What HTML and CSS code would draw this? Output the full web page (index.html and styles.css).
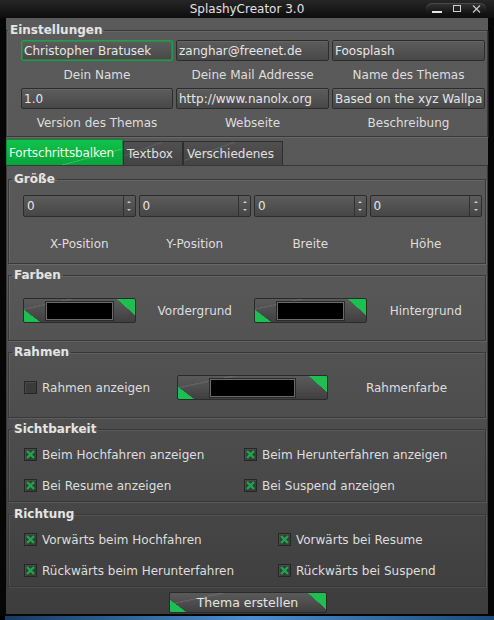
FILE: index.html
```html
<!DOCTYPE html>
<html lang="de">
<head>
    <meta charset="UTF-8">
    <meta name="viewport" content="width=device-width, initial-scale=1.0">
    <title>SplashyCreator 3.0</title>
    <link rel="stylesheet" href="styles.css">
</head>
<body>
    <div class="window">
        <!-- Title bar -->
        <div class="titlebar">
            <span></span>
            <span class="title">SplashyCreator 3.0</span>
            <span class="win-buttons">
                <svg width="60" height="12" viewBox="0 0 60 12">
                    <rect x="6" y="8" width="10" height="2" fill="#e6e6e6"/>
                    <rect x="27.5" y="2.5" width="7" height="6" fill="none" stroke="#d0d0d0"/>
                    <path d="M47 2.5l7 7M54 2.5l-7 7" stroke="#c8c8c8" stroke-width="1.2"/>
                </svg>
            </span>
        </div>

        <div class="frame">
            <div class="client">
                <!-- Einstellungen -->
                <fieldset class="group top">
                    <legend>Einstellungen</legend>
                    <div class="settings-grid">
                        <input class="field focus" type="text" value="Christopher Bratusek">
                        <input class="field" type="text" value="zanghar@freenet.de">
                        <input class="field" type="text" value="Foosplash">
                        <span class="cap">Dein Name</span>
                        <span class="cap">Deine Mail Addresse</span>
                        <span class="cap">Name des Themas</span>
                        <input class="field" type="text" value="1.0">
                        <input class="field" type="text" value="http://www.nanolx.org">
                        <input class="field" type="text" value="Based on the xyz Wallpaper">
                        <span class="cap">Version des Themas</span>
                        <span class="cap">Webseite</span>
                        <span class="cap">Beschreibung</span>
                    </div>
                </fieldset>

                <!-- Tabs -->
                <div class="tabs">
                    <span class="tab active">Fortschrittsbalken</span>
                    <span class="tab t-textbox">Textbox</span>
                    <span class="tab t-misc">Verschiedenes</span>
                </div>

                <div class="pane">
                    <fieldset class="group size">
                        <legend>Größe</legend>
                        <div class="four-grid">
                            <div class="spin"><span class="spin-val">0</span><span class="spin-btn"></span></div>
                            <div class="spin"><span class="spin-val">0</span><span class="spin-btn"></span></div>
                            <div class="spin"><span class="spin-val">0</span><span class="spin-btn"></span></div>
                            <div class="spin"><span class="spin-val">0</span><span class="spin-btn"></span></div>
                            <span class="cap size-cap">X-Position</span>
                            <span class="cap size-cap">Y-Position</span>
                            <span class="cap size-cap">Breite</span>
                            <span class="cap size-cap">Höhe</span>
                        </div>
                    </fieldset>

                    <fieldset class="group colors">
                        <legend>Farben</legend>
                        <div class="four-grid">
                            <span class="swatch-btn"><span class="swatch"></span></span>
                            <span class="cap">Vordergrund</span>
                            <span class="swatch-btn"><span class="swatch"></span></span>
                            <span class="cap">Hintergrund</span>
                        </div>
                    </fieldset>

                    <fieldset class="group colors">
                        <legend>Rahmen</legend>
                        <div class="three-grid">
                            <label class="check-row"><span class="check"></span>Rahmen anzeigen</label>
                            <span class="swatch-btn wide"><span class="swatch"></span></span>
                            <span class="cap">Rahmenfarbe</span>
                        </div>
                    </fieldset>

                    <fieldset class="group options">
                        <legend>Sichtbarkeit</legend>
                        <div class="opt-grid visibility">
                            <label class="check-row"><span class="check on"><svg viewBox="0 0 11 11"><path d="M2 2l7 7M9 2l-7 7"/></svg></span>Beim Hochfahren anzeigen</label>
                            <label class="check-row"><span class="check on"><svg viewBox="0 0 11 11"><path d="M2 2l7 7M9 2l-7 7"/></svg></span>Beim Herunterfahren anzeigen</label>
                            <label class="check-row"><span class="check on"><svg viewBox="0 0 11 11"><path d="M2 2l7 7M9 2l-7 7"/></svg></span>Bei Resume anzeigen</label>
                            <label class="check-row"><span class="check on"><svg viewBox="0 0 11 11"><path d="M2 2l7 7M9 2l-7 7"/></svg></span>Bei Suspend anzeigen</label>
                        </div>
                    </fieldset>

                    <fieldset class="group options direction">
                        <legend>Richtung</legend>
                        <div class="opt-grid">
                            <label class="check-row"><span class="check on"><svg viewBox="0 0 11 11"><path d="M2 2l7 7M9 2l-7 7"/></svg></span>Vorwärts beim Hochfahren</label>
                            <label class="check-row"><span class="check on"><svg viewBox="0 0 11 11"><path d="M2 2l7 7M9 2l-7 7"/></svg></span>Vorwärts bei Resume</label>
                            <label class="check-row"><span class="check on"><svg viewBox="0 0 11 11"><path d="M2 2l7 7M9 2l-7 7"/></svg></span>Rückwärts beim Herunterfahren</label>
                            <label class="check-row"><span class="check on"><svg viewBox="0 0 11 11"><path d="M2 2l7 7M9 2l-7 7"/></svg></span>Rückwärts bei Suspend</label>
                        </div>
                    </fieldset>
                </div>

                <div class="footer">
                    <button class="create-btn">Thema erstellen</button>
                </div>
            </div>
        </div>
    </div>
    <div class="desktop"></div>
</body>
</html>
```

FILE: styles.css
```css
* {
    box-sizing: border-box;
}
html, body {
    margin: 0;
    padding: 0;
}
body {
    background: #000;
    font-family: "DejaVu Sans", "Liberation Sans", sans-serif;
    font-size: 12px;
    color: #dcdcdc;
    width: 494px;
    height: 620px;
    overflow: hidden;
}
.window {
    width: 494px;
    height: 616px;
    background: #060606;
    display: flex;
    flex-direction: column;
}
.desktop {
    height: 4px;
    margin-left: 5px;
    background: linear-gradient(90deg, #163a60, #4b8fd0 50%, #1d4a7a);
}

/* title bar */
.titlebar {
    height: 18px;
    display: grid;
    grid-template-columns: 1fr auto 1fr;
    align-items: center;
    background: linear-gradient(#262626, #0d0d0d);
}
.title {
    color: #e2e2e2;
    line-height: 18px;
}
.win-buttons {
    justify-self: end;
    margin-right: 8px;
    width: 60px;
    height: 12px;
    border-radius: 6px;
    background: linear-gradient(#333, #0e0e0e);
    box-shadow: inset 0 1px 0 #4a4a4a;
}
.win-buttons svg {
    display: block;
}

/* client area */
.frame {
    flex: 1;
    padding: 0 6px 2px 6px;
    display: flex;
}
.client {
    flex: 1;
    display: flex;
    flex-direction: column;
    background: linear-gradient(#5a5a5a 0%, #575757 45%, #4a4a4a 75%, #3d3d3d 100%);
}

/* group boxes */
.group {
    margin: 0;
    padding: 0;
    min-width: 0;
    border: 1px solid #383838;
    box-shadow: inset 1px 1px 0 rgba(255, 255, 255, 0.08), 1px 1px 0 rgba(255, 255, 255, 0.1);
}
.group legend {
    margin-left: 3px;
    padding: 0 2px;
    font-weight: bold;
    line-height: 16px;
    color: #e4e4e4;
}
.group.top {
    margin-top: 4px;
}
.group.top legend {
    margin-left: 1px;
}

.settings-grid {
    display: grid;
    grid-template-columns: 152px 153px 153px;
    grid-template-rows: 21px 27px 21px 27px;
    column-gap: 3px;
    padding: 2px 0 0 14px;
}
.cap {
    text-align: center;
    align-self: center;
    white-space: nowrap;
    color: #dedede;
}
.settings-grid .cap {
    padding-top: 1px;
}

.field {
    height: 21px;
    width: 100%;
    margin: 0;
    padding: 0 2px;
    font: inherit;
    color: #e6e6e6;
    border: 1px solid #2c2c2c;
    border-radius: 2px;
    background: linear-gradient(#5c5c5c, #484848);
    box-shadow: inset 0 1px 0 rgba(255, 255, 255, 0.06);
    outline: none;
}
.field.focus {
    border-color: #1f9f48;
    box-shadow: inset 0 0 0 1px rgba(31, 159, 72, 0.55);
}

/* tabs */
.tabs {
    margin-top: 2px;
    height: 26px;
    display: flex;
    align-items: flex-end;
}
.tab {
    height: 24px;
    line-height: 24px;
    padding: 0 3px;
    white-space: nowrap;
    overflow: hidden;
    border: 1px solid #2e2e2e;
    border-bottom: none;
    background: linear-gradient(160deg, transparent 30%, rgba(255, 255, 255, 0.1) 31%, transparent 34%), linear-gradient(#505050, #444);
    color: #e0e0e0;
}
.tab.active {
    width: 117px;
    height: 26px;
    line-height: 27px;
    padding-left: 2px;
    letter-spacing: -0.15px;
    border-color: #0a8a34;
    background: linear-gradient(165deg, transparent 70%, rgba(255, 255, 255, 0.25) 71%, transparent 73%), linear-gradient(#10c24c, #06a53b);
    color: #eaffea;
}
.t-textbox {
    width: 60px;
}
.t-misc {
    width: 100px;
}

.pane {
    border: 1px solid #383838;
    border-left-color: #3a3a3a;
    padding: 0 1px 0 1px;
    display: flex;
    flex-direction: column;
}
.group.size {
    margin-top: 5px;
}
.group.colors,
.group.options {
    margin-top: 3px;
}
.group.direction {
    margin-top: 4px;
}

.four-grid {
    display: grid;
    grid-template-columns: repeat(4, 1fr);
    column-gap: 3px;
    align-items: center;
    padding: 15px 3px 17px 14px;
}
.size .four-grid {
    padding: 8px 3px 0 14px;
    grid-template-rows: 22px 46px;
}
.size-cap {
    align-self: start;
    padding-top: 17px;
    line-height: 20px;
}
.three-grid {
    display: grid;
    grid-template-columns: repeat(3, 1fr);
    column-gap: 3px;
    align-items: center;
    padding: 15px 3px 17px 14px;
}
.three-grid .check-row {
    margin-left: 1px;
}

/* spin boxes */
.spin {
    height: 22px;
    display: flex;
    border: 1px solid #2c2c2c;
    border-radius: 2px;
    background: linear-gradient(#5c5c5c, #464646);
}
.spin-val {
    flex: 1;
    padding-left: 3px;
    line-height: 20px;
    color: #e6e6e6;
}
.spin-btn {
    width: 12px;
    border-left: 1px solid #303030;
    display: flex;
    flex-direction: column;
    align-items: center;
    justify-content: space-between;
    padding: 5px 0 5px;
}
.spin-btn::before,
.spin-btn::after {
    content: "";
    width: 0;
    height: 0;
    border-left: 2px solid transparent;
    border-right: 2px solid transparent;
}
.spin-btn::before {
    border-bottom: 2px solid #cfcfcf;
}
.spin-btn::after {
    border-top: 2px solid #cfcfcf;
}

/* colour buttons */
.swatch-btn,
.create-btn {
    height: 25px;
    display: flex;
    align-items: center;
    border: 1px solid #2a2a2a;
    border-radius: 2px;
    background:
        linear-gradient(to top right, #1cc052 50%, transparent 51%) left bottom / 16px 12px no-repeat,
        linear-gradient(to bottom left, #1cc052 50%, transparent 51%) right top / 18px 16px no-repeat,
        linear-gradient(168deg, transparent 20%, rgba(255, 255, 255, 0.12) 21%, transparent 24%),
        linear-gradient(#5a5a5a, #4e4e4e 50%, #3f3f3f);
}
.swatch {
    flex: 1;
    height: 18px;
    margin: 1px 22px 0;
    background: #000;
    border: 1px solid #6a6a6a;
    box-shadow: 0 0 0 1px #2a2a2a;
}
.swatch-btn.wide .swatch {
    margin: 1px 32px 0;
}

/* checkboxes */
.opt-grid {
    display: grid;
    grid-template-columns: 254px 1fr;
    grid-auto-rows: 31px;
    align-items: center;
    padding: 2px 0 0 15px;
}
.opt-grid.visibility {
    grid-template-columns: 220px 1fr;
}
.check-row {
    display: flex;
    align-items: center;
    gap: 5px;
    white-space: nowrap;
    color: #dedede;
}
.check {
    width: 13px;
    height: 13px;
    flex: none;
    border: 1px solid #262626;
    background: #3b3b3b;
    box-shadow: inset 1px 1px 0 rgba(255, 255, 255, 0.08);
}
.check svg {
    display: block;
    width: 11px;
    height: 11px;
}
.check svg path {
    stroke: #1ba84a;
    stroke-width: 2.4;
}

/* footer */
.footer {
    display: flex;
    justify-content: center;
    padding-top: 4px;
}
.create-btn {
    width: 158px;
    height: 21px;
    justify-content: center;
    font: inherit;
    font-size: 12.5px;
    color: #e4e4e4;
    padding: 0;
    margin-left: 1px;
}
```
